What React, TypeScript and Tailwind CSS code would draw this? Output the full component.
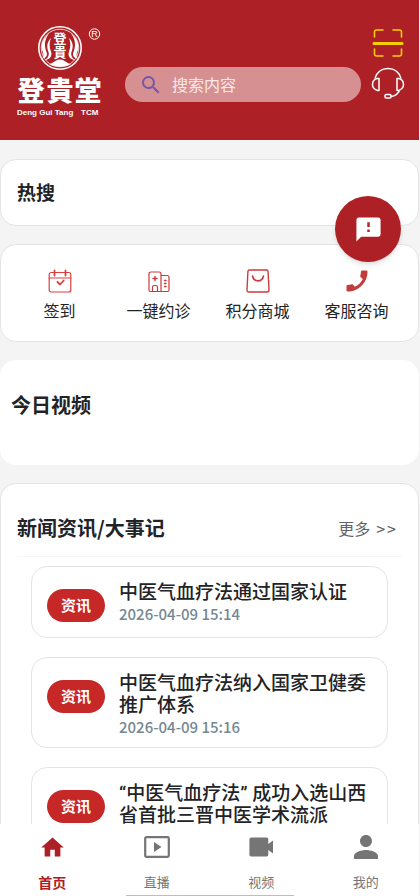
import type { ReactNode } from 'react';
import { MdCall, MdFeedback, MdHome, MdPerson, MdSearch } from 'react-icons/md';

function Logo() {
  return (
    <svg
      viewBox="0 0 90 96"
      className="h-24 w-[90px] shrink-0"
      role="img"
      aria-label="登貴堂 Deng Gui Tang TCM"
      fill="none"
      stroke="#fff"
    >
      <circle cx="45" cy="24" r="21.2" strokeWidth="1.6" />
      <circle cx="45" cy="24" r="18.8" strokeWidth="0.8" />
      <g fill="#fff" stroke="none">
        <path d="M34 9.500c-7 5-9 13-6 19 1 3 0 5-1 6 4 0 6-3 4.500-6.500C29 22 29.500 15 34 9.500z" />
        <path d="M36 14c-5 5-4 10-2.500 14 1 3-.5 6-3.500 8 5-.5 7.500-4 6-8.500-1.500-4-2-8 0-13.500z" />
        <path d="M56 9.500c7 5 9 13 6 19-1 3 0 5 1 6-4 0-6-3-4.500-6.500C61 22 60.500 15 56 9.500z" />
        <path d="M54 14c5 5 4 10 2.500 14-1 3 .5 6 3.500 8-5-.5-7.500-4-6-8.500 1.500-4 2-8 0-13.500z" />
        <path d="M34 40c4 0 6-4.500 11-4.500S52 40 56 40c-6 3.500-16 3.500-22 0z" />
      </g>
      <circle cx="79.500" cy="10" r="5.200" strokeWidth="1" />
      <g fill="#fff" stroke="none" textAnchor="middle">
        <text x="79.500" y="13.200" className="font-['Liberation_Sans'] text-[9px]">R</text>
        <text x="45" y="19" className="font-['Noto_Sans_CJK_TC'] text-[13px] font-bold">登</text>
        <text x="45" y="33" className="font-['Noto_Sans_CJK_TC'] text-[13px] font-bold">貴</text>
      </g>
      <g fill="#fff" stroke="none" textAnchor="middle" className="font-['Noto_Sans_CJK_TC'] text-[27px] font-black">
        <text x="16" y="77">登</text>
        <text x="45" y="77">貴</text>
        <text x="73" y="77">堂</text>
      </g>
      <g fill="#fff" stroke="none" className="font-['Liberation_Sans'] text-[8px] font-bold">
        <text x="2" y="91">Deng Gui Tang</text>
        <text x="66" y="91">TCM</text>
      </g>
    </svg>
  );
}

function ScanIcon() {
  return (
    <svg viewBox="0 0 32 30" className="h-[30px] w-8" fill="none" stroke="#f5cf05" strokeLinecap="round">
      <path d="M2.500 9V4q0-2 2-2H11M21 2h6.500q2 0 2 2v5M2.500 21v5q0 2 2 2H11M21 28h6.500q2 0 2-2v-5" strokeWidth="1.600" />
      <path d="M2 15.500h28" strokeWidth="3" />
    </svg>
  );
}

function HeadsetIcon() {
  return (
    <svg viewBox="0 0 34 32" className="h-8 w-[34px]" fill="none" stroke="#fff" strokeWidth="1.500" strokeLinejoin="round">
      <path d="M4 11.500C6 5 11 1.500 17 1.500S28 5 30 11.500" />
      <path d="M8 11.500v12H6.500C3.500 22.500 1.500 20.500 1.500 17.500s2-5.500 5-6zM26 11.500v12h1.500c3-1 5-3 5-6s-2-5.500-5-6z" />
      <path d="M28.500 23.500c-1.500 3.500-4.500 5.500-8.500 6" />
      <rect x="14" y="27.500" width="6" height="3.500" rx="1.200" />
    </svg>
  );
}

function CheckInIcon() {
  return (
    <svg viewBox="0 0 24 24" className="size-6" fill="none" stroke="#d9403f" strokeWidth="1.200" strokeLinecap="round" strokeLinejoin="round">
      <rect x="1.200" y="3.500" width="21.600" height="19.500" rx="2" />
      <path d="M1.200 9h21.600" />
      <path d="M6.500 1.500v5M17.500 1.500v5" strokeWidth="1.800" />
      <path d="M9.500 13l2.500 2.500 3.700-4" strokeWidth="1.800" />
    </svg>
  );
}

function HospitalIcon() {
  return (
    <svg viewBox="0 0 24 24" className="size-6" fill="none" stroke="#c93a3b" strokeWidth="1.200" strokeLinecap="round" strokeLinejoin="round">
      <path d="M14 22.500H3.500q-1.500 0-1.500-1.500V5q0-2 2-2h8q2 0 2 2zM14 6.500h6q2 0 2 2V21q0 1.500-1.500 1.500H14" />
      <path d="M5.500 22v-4q0-1.500 1.500-1.500h2q1.500 0 1.500 1.500v4" />
      <path d="M8 7.500v4M6 9.500h4M17.500 11.500H19M17.500 14.500H19M17.500 17.500H19" strokeWidth="1.400" />
    </svg>
  );
}

function ShopBagIcon() {
  return (
    <svg viewBox="0 0 24 24" className="size-6" fill="none" stroke="#ce3b3d" strokeWidth="1.400" strokeLinecap="round" strokeLinejoin="round">
      <path d="M3.500 1h17q1.500 0 1.600 1.500l.9 18.500q0 2-2 2H3q-2 0-2-2l.9-18.500Q2 1 3.500 1z" />
      <path d="M6.500 7c1.500 6.500 9.500 6.500 11 0" strokeWidth="1.600" />
    </svg>
  );
}

function LiveIcon() {
  return (
    <svg viewBox="0 0 26 22" className="h-[22px] w-[26px]" fill="none" stroke="currentColor">
      <rect x="1.200" y="1.200" width="23.600" height="19.600" rx="1.200" strokeWidth="2.200" />
      <path d="M10 6v10l7.500-5z" fill="currentColor" stroke="none" />
    </svg>
  );
}

function VideoIcon() {
  return (
    <svg viewBox="0 0 24 20" className="h-5 w-6" fill="currentColor">
      <path d="M2.200.5h15.300q1.800 0 1.800 1.800V7L24 3.500v13L19.300 13v4.700q0 1.800-1.800 1.800H2.200Q.4 19.500.4 17.700V2.300Q.4.500 2.200.5z" />
    </svg>
  );
}

const shortcuts: { label: string; icon: ReactNode }[] = [
  { label: '签到', icon: <CheckInIcon /> },
  { label: '一键约诊', icon: <HospitalIcon /> },
  { label: '积分商城', icon: <ShopBagIcon /> },
  { label: '客服咨询', icon: <MdCall className="size-7 -scale-x-100 text-[#c33b3a]" /> },
];

const news = [
  { title: '中医气血疗法通过国家认证', time: '2026-04-09 15:14' },
  { title: '中医气血疗法纳入国家卫健委推广体系', time: '2026-04-09 15:16' },
  { title: '“中医气血疗法” 成功入选山西省首批三晋中医学术流派', time: '' },
];

const tabs: { label: string; icon: ReactNode; active?: boolean }[] = [
  { label: '首页', icon: <MdHome className="size-[27px]" />, active: true },
  { label: '直播', icon: <LiveIcon /> },
  { label: '视频', icon: <VideoIcon /> },
  { label: '我的', icon: <MdPerson className="size-9" /> },
];

export default function App() {
  return (
    <div className="relative flex h-screen flex-col overflow-hidden bg-[#f4f4f4] pr-px font-['Noto_Sans_CJK_SC',sans-serif] text-[#222326]">
      <header className="flex h-[140px] shrink-0 items-start bg-[#ad2025] pr-[14px] pl-[15px]">
        <div className="mt-6">
          <Logo />
        </div>
        <label className="mt-[67px] ml-5 flex h-[35px] min-w-0 flex-1 items-center gap-[9px] rounded-full bg-[#d69092] pr-4 pl-[14px]">
          <MdSearch className="size-6 shrink-0 text-[#7357aa]" />
          <input
            type="search"
            aria-label="搜索内容"
            placeholder="搜索内容"
            className="w-full min-w-0 bg-transparent pb-px text-base leading-6 outline-none placeholder:text-[#f8e8e8] placeholder:opacity-100"
          />
        </label>
        <div className="mt-7 ml-[10px] flex flex-col items-center gap-[9px]">
          <button type="button" aria-label="扫一扫">
            <ScanIcon />
          </button>
          <button type="button" aria-label="客服">
            <HeadsetIcon />
          </button>
        </div>
      </header>

      <main className="flex min-h-0 flex-1 flex-col gap-[18px] overflow-hidden pt-[19px]">
        <section className="flex h-[67px] shrink-0 items-center rounded-2xl border border-[#e4e4e4] bg-white px-4 pb-px">
          <h2 className="text-[19px] leading-6 font-bold">热搜</h2>
        </section>

        <section className="grid h-[98px] shrink-0 grid-cols-4 rounded-2xl border border-[#e4e4e4] bg-white pt-[22px] pr-3 pl-[9px]">
          {shortcuts.map((item) => (
            <button key={item.label} type="button" className="flex flex-col items-center gap-[3px]">
              <span className="flex h-7 items-center">{item.icon}</span>
              <span className="text-base leading-6 whitespace-nowrap">{item.label}</span>
            </button>
          ))}
        </section>

        <section className="h-[105px] shrink-0 rounded-2xl bg-white px-[11px] pt-[31px]">
          <h2 className="text-xl leading-7 font-bold">今日视频</h2>
        </section>

        <section className="shrink-0 rounded-2xl border border-[#e4e4e4] bg-white px-4 pt-[30px]">
          <div className="flex items-center justify-between border-b border-[#f6f6f6] pb-[14px]">
            <h2 className="text-xl leading-7 font-bold">新闻资讯/大事记</h2>
            <a href="#news" className="flex gap-[6px] pr-[6px] text-base leading-6 text-[#626266]">
              <span>更多</span>
              <span className="flex gap-[2px]">
                <span>&gt;</span>
                <span>&gt;</span>
              </span>
            </a>
          </div>
          <ul id="news" className="mt-[9px] mr-[14px] ml-[14px] flex flex-col gap-[19px] pb-5">
            {news.map((item) => (
              <li
                key={item.title}
                className="flex min-h-[72px] items-start gap-[14px] rounded-2xl border border-[#e4e4e4] pt-[15px] pr-[14px] pb-[11px] pl-[15px]"
              >
                <span className="mt-[7px] flex h-[33px] w-[58px] shrink-0 items-center justify-center rounded-full bg-[#c62828] pb-px text-[15px] leading-5 font-bold text-white">
                  资讯
                </span>
                <div className="min-w-0 flex-1">
                  <h3 className="font-[Roboto,'Noto_Sans_CJK_SC',sans-serif] text-[19px] leading-[22px] font-medium">
                    {item.title}
                  </h3>
                  {item.time && (
                    <p className="text-[15px] leading-[19px] font-medium text-[#748894]">{item.time}</p>
                  )}
                </div>
              </li>
            ))}
          </ul>
        </section>
      </main>

      <nav className="grid h-[72px] shrink-0 grid-cols-4 bg-white pr-px">
        {tabs.map((tab) => (
          <button
            key={tab.label}
            type="button"
            className={
              tab.active
                ? 'flex flex-col items-center gap-[7px] pt-[5px] text-sm leading-5 font-bold text-[#ad2025]'
                : 'flex flex-col items-center gap-[7px] pt-[5px] text-[13px] leading-5 text-[#757575]'
            }
          >
            <span className="flex h-9 items-center">{tab.icon}</span>
            {tab.label}
          </button>
        ))}
      </nav>

      <div className="absolute bottom-0 left-[30%] h-px w-2/5 bg-[#bdbdbd]" />

      <button
        type="button"
        aria-label="意见反馈"
        className="absolute top-[196px] right-[19px] flex size-[66px] items-center justify-center rounded-full bg-[#ad2025] text-white shadow-md"
      >
        <MdFeedback className="size-[29px]" />
      </button>
    </div>
  );
}
